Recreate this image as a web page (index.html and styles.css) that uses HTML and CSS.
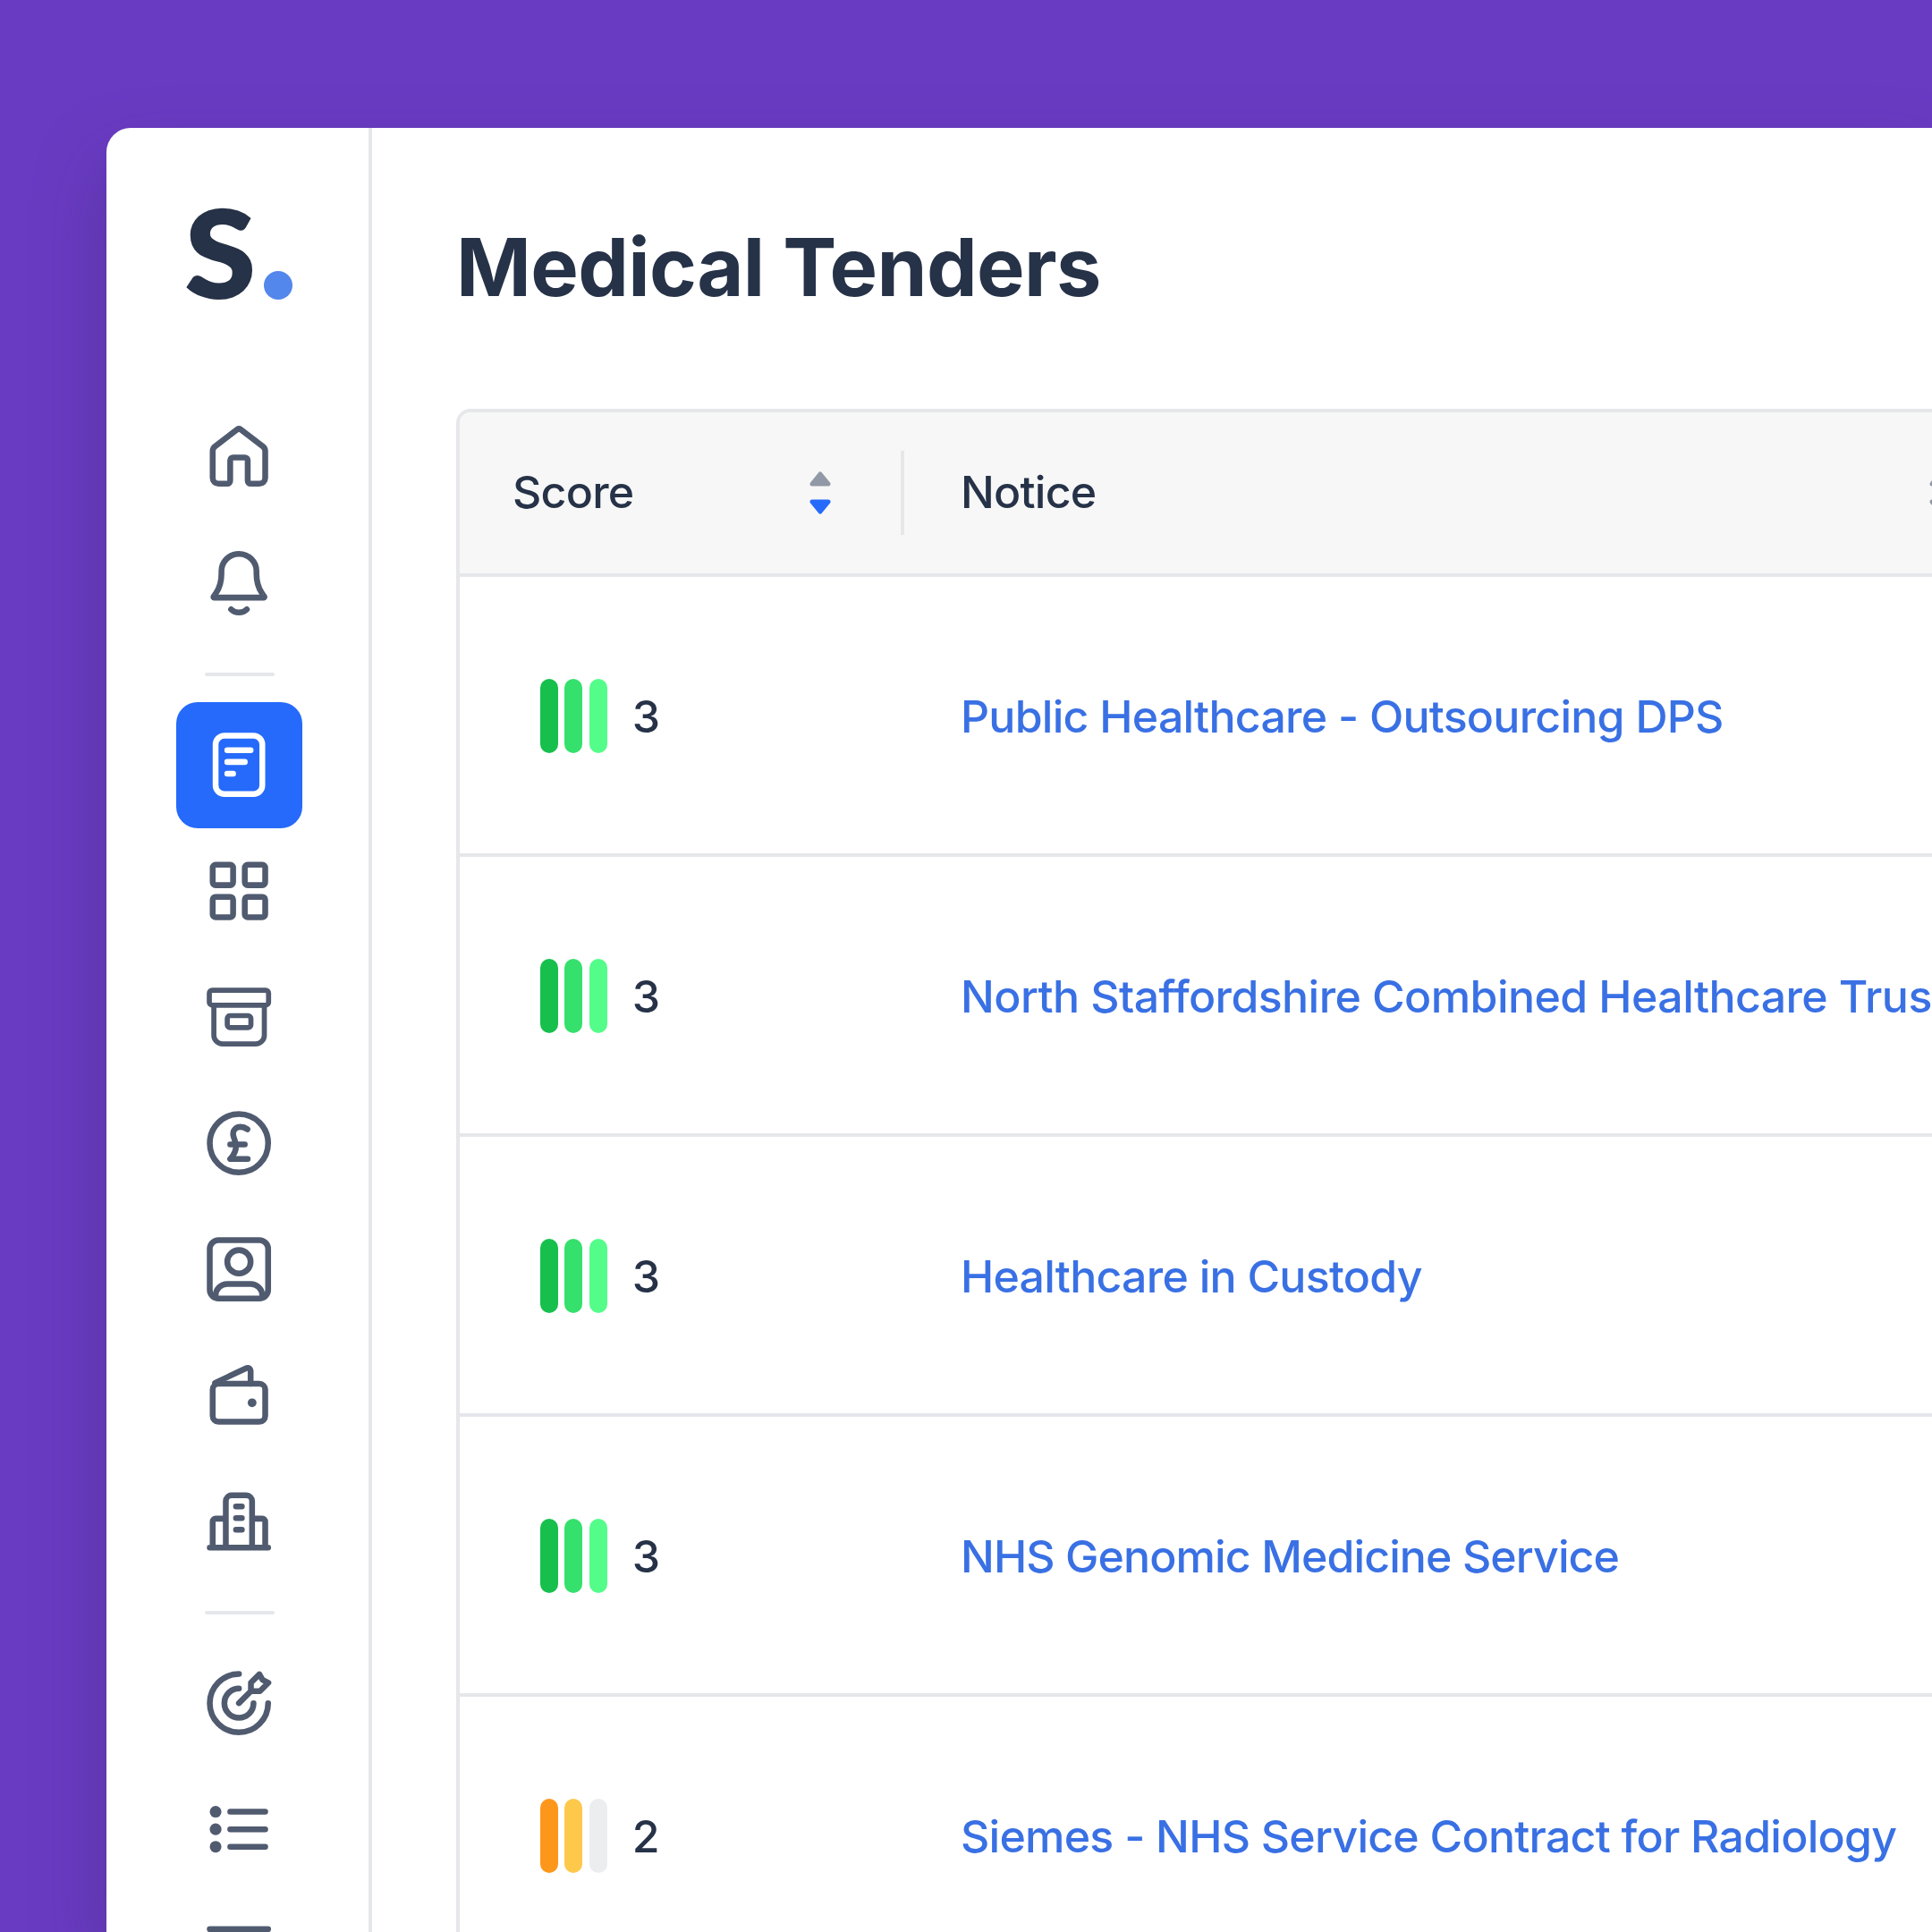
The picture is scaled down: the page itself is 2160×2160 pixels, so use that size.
FILE: index.html
```html
<!DOCTYPE html>
<html lang="en">
<head>
  <meta charset="UTF-8">
  <title>Medical Tenders</title>
  <link rel="stylesheet" href="styles.css">
</head>
<body>

  <div class="app">

    <!-- Sidebar -->
    <aside class="sidebar">
      <div class="logo"><span class="logo-letter">S</span><span class="logo-dot"></span></div>

      <nav class="nav">
        <a class="nav-item"><svg class="icon" viewBox="0 0 24 24"><path d="M8 21.100H5a2 2 0 0 1-2-2V9.900a2 2 0 0 1 .8-1.600l7.600-5.800a1 1 0 0 1 1.200 0l7.600 5.800a2 2 0 0 1 .8 1.600v9.200a2 2 0 0 1-2 2h-3a1 1 0 0 1-1-1v-7a1 1 0 0 0-1-1h-4a1 1 0 0 0-1 1v7a1 1 0 0 1-1 1z"/></svg></a>
        <a class="nav-item"><svg class="icon" viewBox="0 0 24 24"><path d="M12 1.900a6 6 0 0 0-6 6v.8c0 2.500-.6 4.800-1.900 6.700l-.8 1.200a.2.2 0 0 0 .2.300h17a.2.2 0 0 0 .2-.3l-.8-1.200C18.600 13.500 18 11.200 18 8.700v-.8a6 6 0 0 0-6-6z"/><path d="M9.300 20.900c.7.7 1.700 1.100 2.700 1.100s2-.4 2.700-1.100"/></svg></a>

        <hr class="nav-line">

        <a class="nav-item active"><svg class="icon" viewBox="0 0 24 24"><rect x="4" y="2" width="16" height="20" rx="3"/><path d="M8 7h8M8 11h6M8 15h2"/></svg></a>
        <a class="nav-item"><svg class="icon" viewBox="0 0 24 24"><rect x="3" y="3" width="7" height="7" rx="1"/><rect x="14" y="3" width="7" height="7" rx="1"/><rect x="3" y="14" width="7" height="7" rx="1"/><rect x="14" y="14" width="7" height="7" rx="1"/></svg></a>
        <a class="nav-item"><svg class="icon thin" viewBox="0 0 24 24"><rect x="1.850" y="2.800" width="20.300" height="5.100" rx="1"/><path d="M3.400 8v10.200a3 3 0 0 0 3 3h11.300a3 3 0 0 0 3-3V8"/><rect x="8" y="11.500" width="8.100" height="4.100" rx="1"/></svg></a>
        <a class="nav-item"><svg class="icon" viewBox="0 0 24 24"><circle cx="12" cy="12" r="10"/><path d="M14.900 7.200c-.7-.5-1.500-.8-2.400-.8-1.400 0-2.500 1-2.500 2.400 0 1.300 1 2.500 1 4.200 0 1.800-1 3.300-2 4.400h6M9 12.400h5"/></svg></a>
        <a class="nav-item"><svg class="icon" viewBox="0 0 24 24"><rect x="2" y="2" width="20" height="20" rx="3"/><circle cx="12" cy="9.400" r="4"/><path d="M4 21a4 4 0 0 1 4-4h8a4 4 0 0 1 4 4"/></svg></a>
        <a class="nav-item"><svg class="icon" viewBox="0 0 24 24"><rect x="3" y="8" width="18" height="13" rx="2"/><path d="M3.800 7.700l10.800-5.100a1 1 0 0 1 1.400.9V8"/><circle class="dot" cx="16.500" cy="14.500" r="1.500"/></svg></a>
        <a class="nav-item"><svg class="icon" viewBox="0 0 24 24"><path d="M2 20.900h20M7.500 20.900V5a2 2 0 0 1 2-2h5a2 2 0 0 1 2 2v15.900M3 20.900V12a1 1 0 0 1 1-1h3.500M21 20.900V12a1 1 0 0 0-1-1h-3.500M11 6.800h2M11 10.800h2M11 14.800h2"/></svg></a>

        <hr class="nav-line">

        <a class="nav-item"><svg class="icon" viewBox="0 0 24 24"><path d="M12 2a10 10 0 1 0 10 10M12 7a5 5 0 1 0 5 5M12 12l4.100-4.100M16.100 7.900V5L19 2.100l1.100 1.900 2 1-2.900 2.900z"/></svg></a>
        <a class="nav-item"><svg class="icon" viewBox="0 0 24 24"><circle class="dot" cx="4" cy="6" r="2"/><circle class="dot" cx="4" cy="12" r="2"/><circle class="dot" cx="4" cy="18" r="2"/><path d="M9 6h12M9 12h12M9 18h12"/></svg></a>
        <a class="nav-item"><svg class="icon" viewBox="0 0 24 24"><path d="M2 3h20M2 9h20M2 15h20"/></svg></a>
      </nav>
    </aside>

    <!-- Main content -->
    <main class="main">
      <h1 class="title">Medical Tenders</h1>

      <div class="table">
        <div class="row head">
          <div class="cell score-cell">
            <span>Score</span>
            <svg class="sort" viewBox="0 0 24 48"><path class="up" d="M3 14L12 3l9 11z"/><path class="down on" d="M3 34L12 45l9-11z"/></svg>
          </div>
          <div class="cell notice-cell">
            <span>Notice</span>
            <svg class="sort" viewBox="0 0 24 48"><path class="up" d="M3 14L12 3l9 11z"/><path class="down" d="M3 34L12 45l9-11z"/></svg>
          </div>
        </div>

        <div class="row">
          <div class="cell score-cell"><div class="bars high"><i></i><i></i><i></i></div><span>3</span></div>
          <div class="cell notice-cell"><a class="link">Public Healthcare - Outsourcing DPS</a></div>
        </div>
        <div class="row">
          <div class="cell score-cell"><div class="bars high"><i></i><i></i><i></i></div><span>3</span></div>
          <div class="cell notice-cell"><a class="link loose">North Staffordshire Combined Healthcare Trust</a></div>
        </div>
        <div class="row">
          <div class="cell score-cell"><div class="bars high"><i></i><i></i><i></i></div><span>3</span></div>
          <div class="cell notice-cell"><a class="link">Healthcare in Custody</a></div>
        </div>
        <div class="row">
          <div class="cell score-cell"><div class="bars high"><i></i><i></i><i></i></div><span>3</span></div>
          <div class="cell notice-cell"><a class="link tight">NHS Genomic Medicine Service</a></div>
        </div>
        <div class="row">
          <div class="cell score-cell"><div class="bars medium"><i></i><i></i><i></i></div><span>2</span></div>
          <div class="cell notice-cell"><a class="link">Siemes - NHS Service Contract for Radiology</a></div>
        </div>
      </div>
    </main>

  </div>

</body>
</html>
```
FILE: styles.css
```css
* {
  box-sizing: border-box;
}
body {
  margin: 0;
  height: 2160px;
  padding: 143px 0 0 119px;
  overflow: hidden;
  background-color: #693bc2;
  font-family: Inter, "Liberation Sans", sans-serif;
  color: #263247;
}
.app {
  display: flex;
  height: 2017px;
  background-color: #fff;
  border-radius: 27px 0 0 0;
  box-shadow: 0 40px 80px rgba(60, 40, 100, 0.35);
}

/* Sidebar */
.sidebar {
  flex: none;
  width: 297px;
  overflow: hidden;
  border-right: 4px solid #e6e7eb;
}
.logo {
  display: flex;
  align-items: flex-end;
  height: 192px;
  padding-left: 88px;
}
.logo-letter {
  width: 88px;
  font-family: Lato, sans-serif;
  font-size: 136px;
  font-weight: 900;
  line-height: 109px;
  transform: scaleX(1.05);
  transform-origin: left;
  -webkit-text-stroke: 2px #263247;
}
.logo-dot {
  width: 32px;
  height: 32px;
  border-radius: 50%;
  background-color: #5487ec;
}
.nav {
  display: flex;
  flex-direction: column;
  align-items: center;
  padding-top: 105.500px;
}
.nav-item {
  display: flex;
  flex: none;
  align-items: center;
  justify-content: center;
  width: 141px;
  height: 141px;
  margin-left: 4px;
  border-radius: 24px;
  color: #505b70;
}
.nav-item.active {
  background-color: #256afa;
  color: #fff;
}
.nav-line {
  width: 78px;
  height: 4px;
  margin: 29px 0 29px 4px;
  border: 0;
  border-radius: 2px;
  background-color: #e6e7eb;
}
.icon {
  width: 78.300px;
  height: 78.300px;
  fill: none;
  stroke: currentColor;
  stroke-width: 2;
  stroke-linecap: round;
  stroke-linejoin: round;
}
.icon.thin {
  stroke-width: 1.750;
}
.icon .dot {
  fill: currentColor;
  stroke: none;
}

/* Main */
.main {
  flex: 1;
  min-width: 0;
  overflow: hidden;
  padding: 97px 0 0 94px;
}
.title {
  margin: 0;
  height: 217px;
  font-size: 90px;
  font-weight: 700;
  letter-spacing: -0.650px;
  line-height: 118px;
}
.table {
  border: 4px solid #e6e7eb;
  border-right: 0;
  border-radius: 16px 0 0 0;
  overflow: hidden;
  font-size: 50px;
  font-weight: 500;
  letter-spacing: -0.740px;
}
.row {
  display: flex;
  height: 313px;
  padding-top: 2px;
  border-bottom: 4px solid #e6e7eb;
}
.row.head {
  height: 184px;
  padding-top: 0;
  background-color: #f7f7f7;
}
.head span {
  padding-bottom: 2px;
}
.cell {
  display: flex;
  flex: none;
  align-items: center;
}
.score-cell {
  width: 497px;
  padding-left: 90px;
}
.head .score-cell {
  position: relative;
  justify-content: space-between;
  padding: 0 82px 0 59px;
}
.head .score-cell::after {
  content: "";
  position: absolute;
  right: 0;
  top: 43px;
  width: 4px;
  height: 94px;
  background-color: #e6e7eb;
}
.notice-cell {
  padding-left: 63px;
  white-space: nowrap;
}
.head .notice-cell {
  justify-content: space-between;
  width: 1170px;
}
.sort {
  width: 24px;
  height: 48px;
}
.sort path {
  fill: #9299a6;
  stroke: #9299a6;
  stroke-width: 5;
  stroke-linejoin: round;
}
.sort .on {
  fill: #256afa;
  stroke: #256afa;
}
.bars {
  display: flex;
  gap: 7.800px;
  margin-right: 28px;
}
.bars i {
  width: 19.700px;
  height: 83px;
  border-radius: 10px;
}
.high i:nth-child(1) {
  background-color: #17c04d;
}
.high i:nth-child(2) {
  background-color: #35e06c;
}
.high i:nth-child(3) {
  background-color: #54fd89;
}
.medium i:nth-child(1) {
  background-color: #fd971c;
}
.medium i:nth-child(2) {
  background-color: #fec84b;
}
.medium i:nth-child(3) {
  background-color: #ebedef;
}
.link {
  color: #3970e4;
}
.link.loose {
  letter-spacing: -0.570px;
}
.link.tight {
  letter-spacing: -0.890px;
}
```
